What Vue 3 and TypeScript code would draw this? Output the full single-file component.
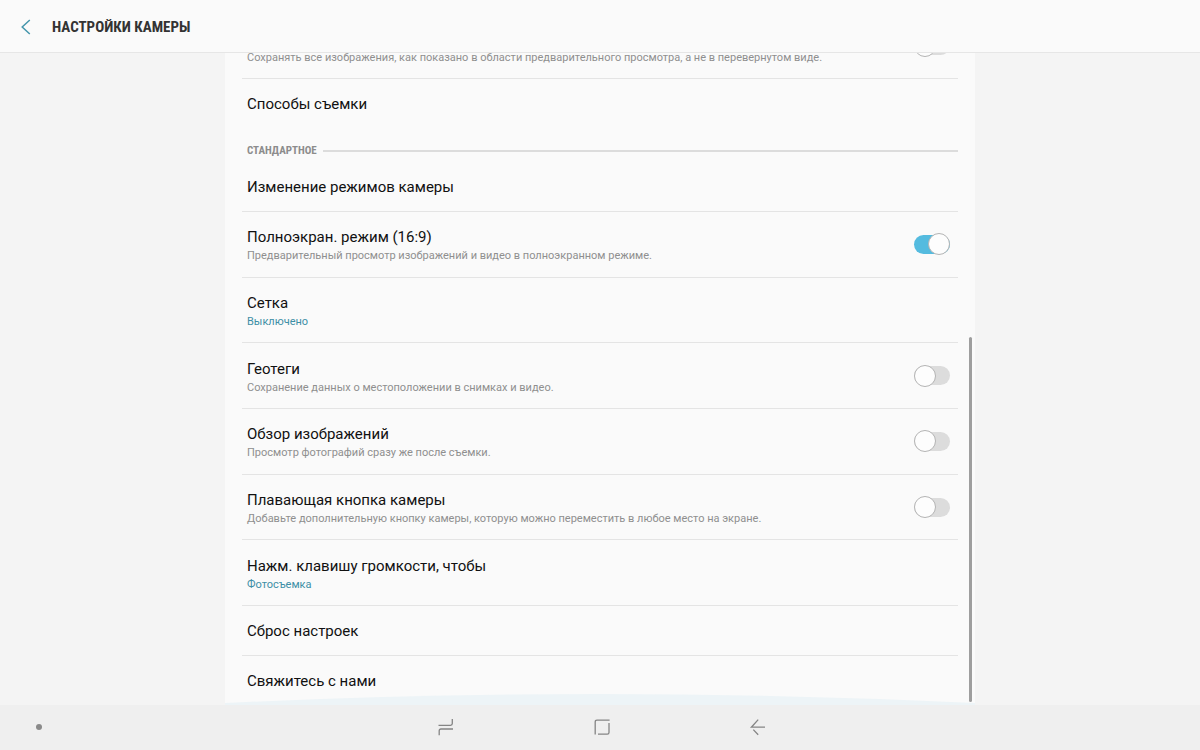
<script setup lang="ts">
import { reactive } from 'vue'

interface Setting {
  id: string
  title: string
  note?: string
  value?: string
  on?: boolean
}

const general = reactive<Setting[]>([
  {
    id: 'mirror',
    title: 'Сохранить как показано',
    note: 'Сохранять все изображения, как показано в области предварительного просмотра, а не в перевернутом виде.',
    on: false,
  },
  { id: 'capture', title: 'Способы съемки' },
])

const standard = reactive<Setting[]>([
  { id: 'modes', title: 'Изменение режимов камеры' },
  { id: 'full', title: 'Полноэкран. режим (16:9)', note: 'Предварительный просмотр изображений и видео в полноэкранном режиме.', on: true },
  { id: 'grid', title: 'Сетка', value: 'Выключено' },
  { id: 'geo', title: 'Геотеги', note: 'Сохранение данных о местоположении в снимках и видео.', on: false },
  { id: 'review', title: 'Обзор изображений', note: 'Просмотр фотографий сразу же после съемки.', on: false },
  { id: 'floating', title: 'Плавающая кнопка камеры', note: 'Добавьте дополнительную кнопку камеры, которую можно переместить в любое место на экране.', on: false },
  { id: 'volume', title: 'Нажм. клавишу громкости, чтобы', value: 'Фотосъемка' },
  { id: 'reset', title: 'Сброс настроек' },
  { id: 'contact', title: 'Свяжитесь с нами' },
])

const groups = [
  { id: 'general', heading: '', items: general },
  { id: 'standard', heading: 'СТАНДАРТНОЕ', items: standard },
]
</script>

<template>
  <div class="screen">
    <header class="bar">
      <button class="back" type="button" aria-label="Назад">
        <svg width="12" height="18" viewBox="0 0 12 18" fill="none" stroke="#4596ac" stroke-width="1.5">
          <path d="M9.8 2 2.2 9l7.6 7" />
        </svg>
      </button>
      <h1>НАСТРОЙКИ КАМЕРЫ</h1>
    </header>

    <main class="viewport">
      <div class="panel">
        <section v-for="group in groups" :key="group.id" :class="['group', group.id]">
          <h2 v-if="group.heading" class="heading">{{ group.heading }}</h2>
          <template v-for="item in group.items" :key="item.id">
            <label v-if="item.on !== undefined" class="row tall">
              <span class="text">
                <span class="title">{{ item.title }}</span>
                <span class="note">{{ item.note }}</span>
              </span>
              <input v-model="item.on" class="switch" type="checkbox" role="switch" />
            </label>
            <button v-else type="button" :class="['row', { tall: item.value }]">
              <span class="text">
                <span class="title">{{ item.title }}</span>
                <span v-if="item.value" class="note value">{{ item.value }}</span>
              </span>
            </button>
          </template>
        </section>
        <svg class="glow" viewBox="0 0 750 12" preserveAspectRatio="none" aria-hidden="true">
          <path d="M0 10Q375 -8 750 10V12H0Z" fill="#edf4f7" />
        </svg>
        <div class="scrollbar"></div>
      </div>
    </main>

    <nav class="navbar">
      <span class="dot"></span>
      <div class="keys">
        <button type="button" aria-label="Последние">
          <svg width="18" height="18" viewBox="0 0 18 18" fill="none" stroke="#858585" stroke-width="1.3">
            <path d="M1.5 7.4H13.5Q15.3 7.4 15.3 5.6V1M16 11H4Q2.2 11 2.2 12.8V17.3" />
          </svg>
        </button>
        <button type="button" aria-label="Главный экран">
          <svg width="18" height="18" viewBox="0 0 18 18" fill="none" stroke="#858585" stroke-width="1.3">
            <path d="M16.6 2.1H4Q2.2 2.1 2.2 3.9V16.5M5 16.1H14.3Q16 16.1 16 14.4V5" />
          </svg>
        </button>
        <button type="button" aria-label="Назад">
          <svg width="18" height="18" viewBox="0 0 18 18" fill="none" stroke="#858585" stroke-width="1.3">
            <path d="M16 9.2H2.4L9.2 1.6M4.3 11.6 9.2 16.8" />
          </svg>
        </button>
      </div>
    </nav>
  </div>
</template>

<style>
body {
  margin: 0;
}
</style>

<style scoped>
.screen {
  display: flex;
  flex-direction: column;
  height: 100vh;
  background: #f4f4f4;
  font-family: Roboto, "Noto Sans", sans-serif;
  color: #111;
}
button {
  margin: 0;
  padding: 0;
  border: 0;
  background: none;
  font: inherit;
  color: inherit;
  cursor: pointer;
}
.bar {
  flex: none;
  display: flex;
  align-items: center;
  gap: 20px;
  height: 51px;
  padding: 1px 20px 0;
  border-bottom: 1px solid #e6e6e6;
  background: #fafafa;
}
.back,
.keys button {
  display: flex;
}
h1,
h2 {
  margin: 0;
  font-family: "Roboto Condensed", "Liberation Sans Narrow", Roboto, sans-serif;
  font-weight: 700;
}
h1 {
  font-size: 15px;
  line-height: 20px;
  color: #333;
}
.viewport {
  flex: 1;
  min-height: 0;
  display: flex;
  justify-content: center;
  overflow: hidden;
}
.panel {
  position: relative;
  box-sizing: border-box;
  display: flex;
  flex-direction: column;
  width: 62.5%;
  padding: 0 17px;
  background: #fafafa;
}
.group {
  display: flex;
  flex-direction: column;
}
.general {
  margin-top: -40px;
}
.standard {
  flex: 1;
}
.heading {
  display: flex;
  align-items: center;
  gap: 6px;
  height: 20px;
  padding: 12px 0 1px 5px;
  font-size: 11px;
  line-height: 20px;
  color: #8c8c8c;
}
.heading::after {
  content: "";
  flex: 1;
  height: 2px;
  background: #dcdcdc;
}
.row {
  flex: none;
  box-sizing: border-box;
  display: flex;
  align-items: center;
  justify-content: space-between;
  height: 50px;
  padding: 0 8px 0 5px;
  border-bottom: 1px solid #e4e4e4;
  text-align: left;
  cursor: pointer;
}
.row.tall {
  flex: 1 0 65px;
  height: auto;
}
.general .row.tall {
  flex: none;
  height: 66px;
}
.row:last-child {
  height: 49px;
  border-bottom: 0;
}
.general .row:last-child {
  height: 50px;
}
.text {
  display: flex;
  flex-direction: column;
  gap: 1px;
}
.tall .text {
  padding-top: 3px;
}
.title {
  font-size: 15px;
  line-height: 20px;
}
.note {
  font-size: 11px;
  line-height: 16px;
  color: #8f8f8f;
}
.value {
  color: #3d8fa6;
}
.switch {
  appearance: none;
  position: relative;
  flex: none;
  display: flex;
  align-items: center;
  width: 36px;
  height: 22px;
  margin: 0;
}
.switch::before {
  content: "";
  width: 100%;
  height: 19px;
  border-radius: 10px;
  background: #dcdcdc;
}
.switch::after {
  content: "";
  position: absolute;
  left: 0;
  top: 0;
  box-sizing: border-box;
  width: 22px;
  height: 22px;
  border: 1px solid #b4b4b4;
  border-radius: 50%;
  background: #fdfdfd;
}
.switch:checked::before {
  background: #54bbdf;
}
.switch:checked::after {
  left: auto;
  right: 0;
}
.glow {
  position: absolute;
  left: 0;
  bottom: 0;
  width: 100%;
  height: 12px;
  pointer-events: none;
}
.scrollbar {
  position: absolute;
  right: 3px;
  bottom: 3px;
  width: 3px;
  height: 56%;
  border-radius: 2px;
  background: #9e9e9e;
}
.navbar {
  flex: none;
  box-sizing: border-box;
  display: grid;
  grid-template-columns: 1fr auto 1fr;
  align-items: center;
  height: 45px;
  padding: 0 0 2px 3px;
  background: #efefef;
}
.dot {
  width: 6px;
  height: 6px;
  margin-left: 33px;
  border-radius: 50%;
  background: #8a8a8a;
}
.keys {
  display: flex;
  gap: 138px;
}
</style>
